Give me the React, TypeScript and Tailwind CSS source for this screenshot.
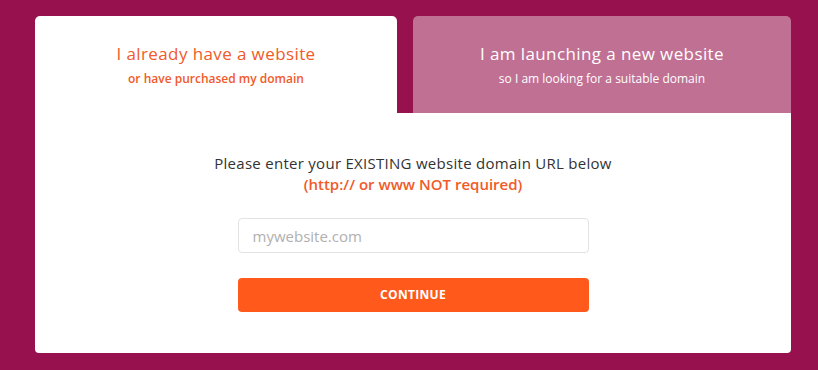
import React from "react";

export default function App() {
  return (
    <div
      className="w-[818px] h-[370px] bg-[#98114f] pt-[16px] pl-[35px] pr-[27px]"
      style={{ fontFamily: '"Open Sans", "Liberation Sans", sans-serif' }}
    >
      <div className="flex gap-[16px] h-[97px]">
        <div className="w-[362px] bg-white rounded-t-[5px] flex flex-col items-center pt-[26px]">
          <div className="text-[17px] leading-[24px] tracking-[0.4px] text-[#f15a29]">I already have a website</div>
          <div className="text-[12px] leading-[16px] mt-[5px] font-semibold text-[#f15a29]">or have purchased my domain</div>
        </div>
        <div className="flex-1 bg-[#bf7093] rounded-t-[5px] flex flex-col items-center pt-[26px]">
          <div className="text-[17px] leading-[24px] tracking-[0.4px] text-white">I am launching a new website</div>
          <div className="text-[12px] leading-[16px] mt-[5px] text-white">so I am looking for a suitable domain</div>
        </div>
      </div>
      <div className="h-[240px] bg-white rounded-b-[4px] flex flex-col items-center pt-[39px]">
        <div className="text-[15px] leading-[22px] tracking-[0.28px] text-[#333333]">Please enter your EXISTING website domain URL below</div>
        <div className="text-[15px] leading-[21px] font-semibold text-[#f15a29]">(http:// or www NOT required)</div>
        <input
          placeholder="mywebsite.com"
          className="mt-[23px] w-[351px] h-[35px] border border-[#e3e3e3] rounded-[4px] px-[14px] text-[15px] text-[#333] placeholder:text-[#b0b0b0] outline-none"
        />
        <button className="mt-[25px] w-[351px] h-[34px] bg-[#ff5a1c] rounded-[4px] text-white text-[12px] tracking-[0.3px] font-bold">
          CONTINUE
        </button>
      </div>
    </div>
  );
}
